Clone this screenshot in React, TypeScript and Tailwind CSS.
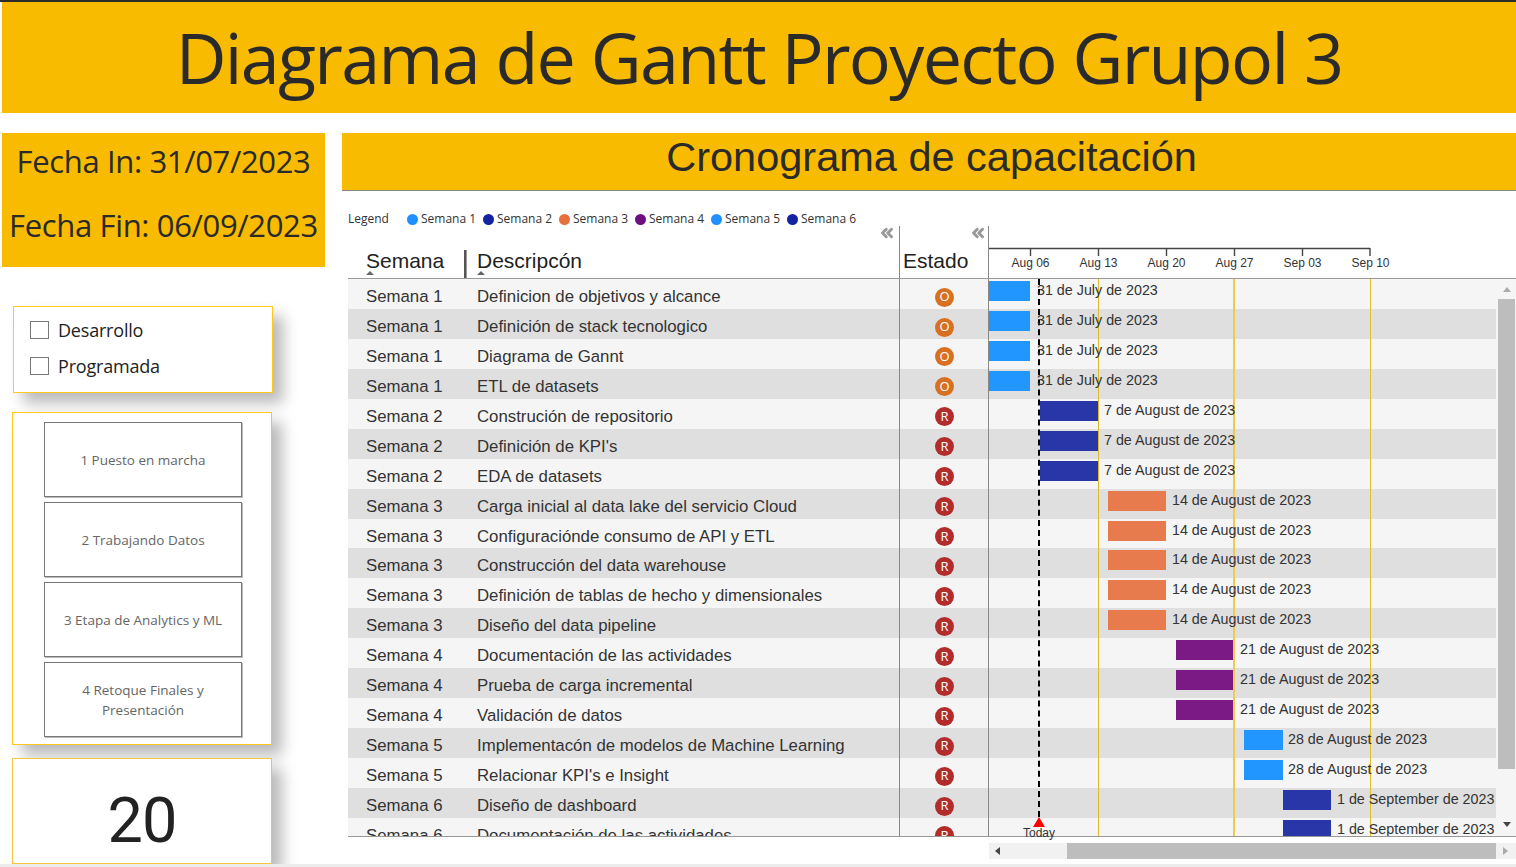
import { ChevronsLeft } from 'lucide-react';

const rows: [number, string][] = [
  [1, 'Definicion de objetivos y alcance'],
  [1, 'Definición de stack tecnologico'],
  [1, 'Diagrama de Gannt'],
  [1, 'ETL de datasets'],
  [2, 'Construción de repositorio'],
  [2, "Definición de KPI's"],
  [2, 'EDA de datasets'],
  [3, 'Carga inicial al data lake del servicio Cloud'],
  [3, 'Configuraciónde consumo de API y ETL'],
  [3, 'Construcción del data warehouse'],
  [3, 'Definición de tablas de hecho y dimensionales'],
  [3, 'Diseño del data pipeline'],
  [4, 'Documentación de las actividades'],
  [4, 'Prueba de carga incremental'],
  [4, 'Validación de datos'],
  [5, 'Implementacón de modelos de Machine Learning'],
  [5, "Relacionar KPI's e Insight"],
  [6, 'Diseño de dashboard'],
  [6, 'Documentación de las actividades'],
];

const weeks: Record<number, { bar: string; label: string; gap: string }> = {
  1: { bar: 'ml-0 w-[41px] bg-[#2196ff]', label: '31 de July de 2023', gap: 'ml-[7px]' },
  2: { bar: 'ml-[51px] w-[58px] bg-[#2936a8]', label: '7 de August de 2023', gap: 'ml-[6px]' },
  3: { bar: 'ml-[119px] w-[58px] bg-[#e87b4e]', label: '14 de August de 2023', gap: 'ml-[6px]' },
  4: { bar: 'ml-[187px] w-[58px] bg-[#7b1a85]', label: '21 de August de 2023', gap: 'ml-[6px]' },
  5: { bar: 'ml-[255px] w-[39px] bg-[#2196ff]', label: '28 de August de 2023', gap: 'ml-[5px]' },
  6: { bar: 'ml-[294px] w-[48px] bg-[#2936a8]', label: '1 de September de 2023', gap: 'ml-[6px]' },
};

const legend = [
  ['Semana 1', 'bg-[#1e90ff]'],
  ['Semana 2', 'bg-[#14239f]'],
  ['Semana 3', 'bg-[#e8703a]'],
  ['Semana 4', 'bg-[#6e0f80]'],
  ['Semana 5', 'bg-[#1e90ff]'],
  ['Semana 6', 'bg-[#14239f]'],
];

const phases = ['1 Puesto en marcha', '2 Trabajando Datos', '3 Etapa de Analytics y ML', '4 Retoque Finales y Presentación'];
const ticks = ['Aug 06', 'Aug 13', 'Aug 20', 'Aug 27', 'Sep 03', 'Sep 10'];

const segoe = "font-['Open_Sans',sans-serif]";
const arial = "font-['Liberation_Sans',Arial,sans-serif]";

function SortMark() {
  return <span className="absolute left-[18px] bottom-[3px] w-0 h-0 border-x-[4px] border-x-transparent border-b-[4px] border-b-[#666]" />;
}

function Badge({ late }: { late: boolean }) {
  return (
    <span className={`${segoe} ml-[1px] w-[19px] h-[19px] rounded-full flex items-center justify-center text-[13px] text-white ${late ? 'bg-[#b22c2c]' : 'bg-[#d87022]'}`}>
      {late ? 'R' : 'O'}
    </span>
  );
}

export default function App() {
  return (
    <div className={`w-[1516px] h-[867px] bg-white overflow-hidden flex flex-col border-t-2 border-[#2b2b2b] ${arial}`}>
      {/* Title */}
      <div className={`${segoe} ml-[2px] h-[111px] shrink-0 bg-[#f8bb00] flex items-center justify-center text-[70px] text-[#2a2a2a] tracking-[-1.67px]`}>
        Diagrama de Gantt Proyecto Grupol 3
      </div>

      <div className="flex mt-[20px] h-[731px] shrink-0">
        {/* Left column */}
        <div className="w-[342px] shrink-0 pl-[2px]">
          <div className={`${segoe} w-[323px] h-[134px] bg-[#f8bb00] flex flex-col items-center justify-center gap-[22px] pb-[14px] text-[31px] leading-[42px] text-[#2a2a2a] tracking-[-0.35px]`}>
            <div>Fecha In: 31/07/2023</div>
            <div>Fecha Fin: 06/09/2023</div>
          </div>

          <div className={`${segoe} ml-[11px] mt-[39px] w-[260px] h-[87px] bg-white border border-[#ffc81e] shadow-[10px_10px_14px_rgba(0,0,0,0.28)] pl-[16px] pt-[5px] text-[18px] text-[#222] tracking-[-0.2px]`}>
            <div className="flex items-center gap-[9px] h-[36px]">
              <span className="w-[19px] h-[18px] border border-[#777]" />
              Desarrollo
            </div>
            <div className="flex items-center gap-[9px] h-[36px]">
              <span className="w-[19px] h-[18px] border border-[#777]" />
              Programada
            </div>
          </div>

          <div className="ml-[10px] mt-[19px] w-[260px] h-[333px] bg-white border border-[#ffc81e] shadow-[10px_10px_14px_rgba(0,0,0,0.28)] pt-[9px] pl-[31px] flex flex-col gap-[5px]">
            {phases.map(p => (
              <div key={p} className={`${segoe} w-[198px] h-[75px] border border-[#777] shadow-[1px_1px_0_#bbb] flex items-center justify-center text-center px-[14px] text-[13.5px] leading-[20px] text-[#666]`}>
                {p}
              </div>
            ))}
          </div>

          <div className="ml-[10px] mt-[13px] w-[260px] h-[106px] bg-white border border-[#f5c542] shadow-[10px_10px_14px_rgba(0,0,0,0.28)] flex items-center justify-center font-['Roboto',sans-serif] text-[63px] text-[#222] tracking-[-1px] pt-[20px]">
            20
          </div>
        </div>

        {/* Gantt visual */}
        <div className="w-[1174px] shrink-0">
          <div className="h-[58px] bg-[#f8bb00] border-b border-[#888] pl-[5px] flex justify-center text-[41.5px] leading-[48px] text-[#2a2a2a]">
            Cronograma de capacitación
          </div>

          <div className={`${segoe} h-[35px] pl-[6px] pt-[21px] flex items-center text-[12px] text-[#333]`}>
            <span className="w-[59px]">Legend</span>
            {legend.map(([name, color]) => (
              <span key={name} className="w-[76px] flex items-center gap-[3px] whitespace-nowrap">
                <span className={`w-[11px] h-[11px] rounded-full ${color}`} />
                {name}
              </span>
            ))}
          </div>

          <div className="ml-[6px]">
            {/* Column headers */}
            <div className="grid grid-cols-[117px_434px_89px_508px] h-[53px] border-b border-[#999] text-[21px] text-[#222]">
              <div className="relative flex items-end pl-[18px] pb-[4px] leading-[26px]">
                Semana
                <SortMark />
                <span className="absolute right-[-2px] bottom-0 h-[28px] w-[3px] border-l-2 border-r border-l-[#555] border-r-[#999]" />
              </div>
              <div className="relative flex items-end pl-[12px] pb-[4px] leading-[26px]">
                Descripcón
                <span className="absolute left-[12px] bottom-[3px] w-0 h-0 border-x-[4px] border-x-transparent border-b-[4px] border-b-[#666]" />
                <ChevronsLeft size={18} strokeWidth={4} className="absolute right-[3px] top-[-2px] text-[#999]" />
              </div>
              <div className="relative flex items-end border-l border-[#888] pl-[3px] pb-[4px] leading-[26px]">
                Estado
                <ChevronsLeft size={18} strokeWidth={4} className="absolute right-[1px] top-[-2px] text-[#999]" />
              </div>
              <div className="border-l border-[#888]">
                <svg width="507" height="52" className="block">
                  <path d="M0 22.5H381M41.5 22V30M109.5 22V30M177.5 22V30M245.5 22V30M313.5 22V30M381 22V30" stroke="#444" strokeWidth="1.4" fill="none" />
                  {ticks.map((t, i) => (
                    <text key={t} x={41.5 + i * 68} y={41} textAnchor="middle" fontSize="12" fill="#333" fontFamily="Liberation Sans, Arial, sans-serif">
                      {t}
                    </text>
                  ))}
                </svg>
              </div>
            </div>

            {/* Rows */}
            <div className="flex h-[558px] border-b border-[#999]">
              <div className="relative w-[1148px] shrink-0">
                <div className="h-[557px] overflow-hidden">
                  {rows.map(([week, desc], i) => {
                    const w = weeks[week];
                    return (
                      <div key={i} className={`grid grid-cols-[117px_434px_89px_508px] h-[29.95px] text-[16.8px] text-[#333] ${i % 2 ? 'bg-[#dfdfdf]' : 'bg-[#f5f5f5]'}`}>
                        <div className="pl-[18px] pt-[5px] flex items-center whitespace-nowrap">Semana {week}</div>
                        <div className="pl-[12px] pt-[5px] flex items-center whitespace-nowrap">{desc}</div>
                        <div className="border-l border-[#888] pt-[6px] flex items-center justify-center"><Badge late={week > 1} /></div>
                        <div className="border-l border-[#888] pt-[2px] flex items-start overflow-hidden whitespace-nowrap text-[14.3px] leading-[18px]">
                          <span className={`h-[20px] shrink-0 ${w.bar}`} />
                          <span className={`${w.gap} relative z-10`}>{w.label}</span>
                        </div>
                      </div>
                    );
                  })}
                </div>

                <span className="absolute left-[750px] top-0 bottom-0 w-px bg-[#e0b82a]" />
                <span className="absolute left-[885px] top-0 bottom-0 w-[2px] bg-[#efca4e]" />
                <span className="absolute left-[1022px] top-0 bottom-0 w-px bg-[#e8bc20]" />
                <span className="absolute left-[690px] top-0 h-[538px] border-l-2 border-dashed border-black" />
                <span className="absolute left-[685px] top-[538px] w-0 h-0 border-x-[6px] border-x-transparent border-b-[10px] border-b-[#f00]" />
                <span className="absolute left-[675px] top-[547px] text-[12px] leading-[14px] text-[#333]">Today</span>
              </div>

              {/* Vertical scrollbar */}
              <div className="flex-1 bg-[#f5f5f5] pl-[2px] pr-[1px] flex flex-col items-stretch">
                <div className="h-[20px] flex items-center justify-center">
                  <span className="w-0 h-0 border-x-[4px] border-x-transparent border-b-[5px] border-b-[#aaa]" />
                </div>
                <div className="h-[470px] bg-[#bdbdbd]" />
                <div className="flex-1 flex items-end justify-center pb-[9px]">
                  <span className="w-0 h-0 border-x-[4px] border-x-transparent border-t-[5px] border-t-[#444]" />
                </div>
              </div>
            </div>

            {/* Horizontal scrollbar */}
            <div className="ml-[641px] mt-[6px] h-[16px] bg-[#f1f1f1] flex items-center">
              <div className="w-[78px] flex items-center pl-[6px]">
                <span className="w-0 h-0 border-y-[4px] border-y-transparent border-r-[5px] border-r-[#444]" />
              </div>
              <div className="w-[429px] h-full bg-[#bdbdbd]" />
              <div className="flex-1 flex items-center pl-[7px]">
                <span className="w-0 h-0 border-y-[4px] border-y-transparent border-l-[5px] border-l-[#aaa]" />
              </div>
            </div>
          </div>
        </div>
      </div>
      <div className="h-[3px] bg-[#ececec] shrink-0" />
    </div>
  );
}
